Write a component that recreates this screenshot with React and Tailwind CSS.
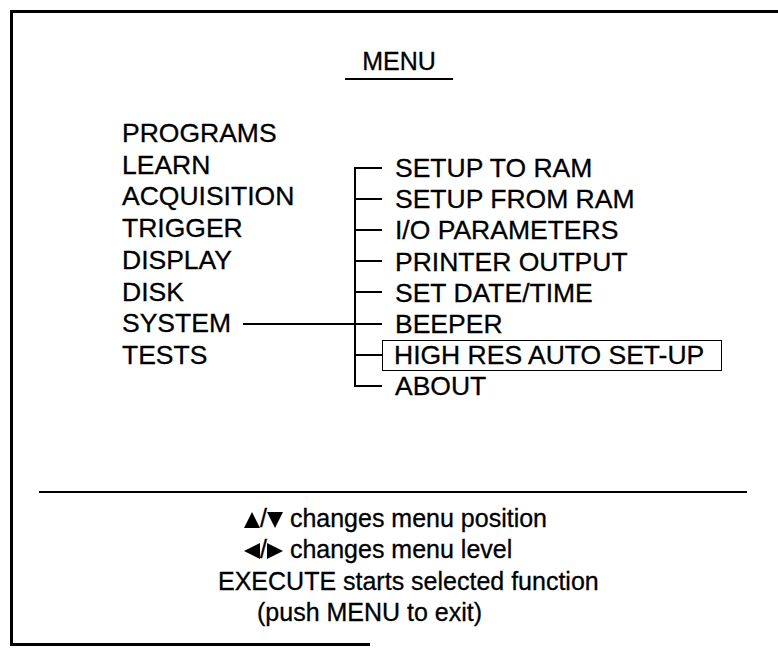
const mainItems = ["PROGRAMS", "LEARN", "ACQUISITION", "TRIGGER", "DISPLAY", "DISK", "SYSTEM", "TESTS"]
const subItems = [
  "SETUP TO RAM",
  "SETUP FROM RAM",
  "I/O PARAMETERS",
  "PRINTER OUTPUT",
  "SET DATE/TIME",
  "BEEPER",
  "HIGH RES AUTO SET-UP",
  "ABOUT",
]

const Tri = ({ dir }) => {
  const pts = {
    up: "0,16 8,0 16,16",
    down: "0,0 16,0 8,16",
    left: "16,0 16,16 0,8",
    right: "0,0 0,16 16,8",
  }
  return (
    <svg width="16" height="16" viewBox="0 0 16 16" className="inline-block h-[16px] w-[16px] align-[-1px]">
      <polygon points={pts[dir]} fill="black" />
    </svg>
  )
}

const SubRow = ({ label, first, last, selected }) => (
  <div className="flex h-[31.2px]">
    <div className="flex w-[28px] flex-col">
      <div className={`h-1/2 border-b-2 border-black ${first ? "" : "border-l-2"}`} />
      <div className={`h-1/2 border-black ${last ? "" : "border-l-2"}`} />
    </div>
    {selected ? (
      <div className="flex w-[340px] items-center border-[1.5px] border-black pl-[11px]">{label}</div>
    ) : (
      <div className="flex items-center pl-[13px]">{label}</div>
    )}
  </div>
)

const App = () => {
  return (
    <div className="h-[648px] w-[778px] overflow-hidden bg-white pl-[10px] pt-[10px] font-['Liberation_Sans',Arial,sans-serif] text-black [-webkit-text-stroke:0.3px_black]">
      <div className="flex h-[633px] flex-col border-l-[3px] border-t-[3px] border-black">
        <div className="ml-[332px] mt-[33px] w-[108px] border-b-2 border-black pb-[2px] text-center text-[25px] leading-[30px]">
          MENU
        </div>

        <div className="mt-[38px] flex text-[26.5px]">
          <div className="ml-[109px] w-[232px] leading-[31.7px]">
            {mainItems.map((item) =>
              item === "SYSTEM" ? (
                <div key={item} className="flex items-center">
                  <span>{item}</span>
                  <span className="ml-[12px] h-[2px] flex-1 bg-black" />
                </div>
              ) : (
                <div key={item}>{item}</div>
              )
            )}
          </div>
          <div className="mt-[35px] leading-[31.2px]">
            {subItems.map((item, i) => (
              <SubRow
                key={item}
                label={item}
                first={i === 0}
                last={i === subItems.length - 1}
                selected={item === "HIGH RES AUTO SET-UP"}
              />
            ))}
          </div>
        </div>

        <div className="mx-auto mt-[88px] h-[2px] w-[708px] -translate-x-[3px] bg-black" />

        <div className="mt-[10px] flex flex-col text-[25px] leading-[31.5px]">
          <div className="ml-[231px]">
            <Tri dir="up" />/<Tri dir="down" /> changes menu position
          </div>
          <div className="ml-[231px]">
            <Tri dir="left" />/<Tri dir="right" /> changes menu level
          </div>
          <div className="ml-[205px]">EXECUTE starts selected function</div>
          <div className="ml-[244px]">(push MENU to exit)</div>
        </div>
      </div>
      <div className="h-[3px] w-[360px] bg-black" />
    </div>
  )
}

export default App
